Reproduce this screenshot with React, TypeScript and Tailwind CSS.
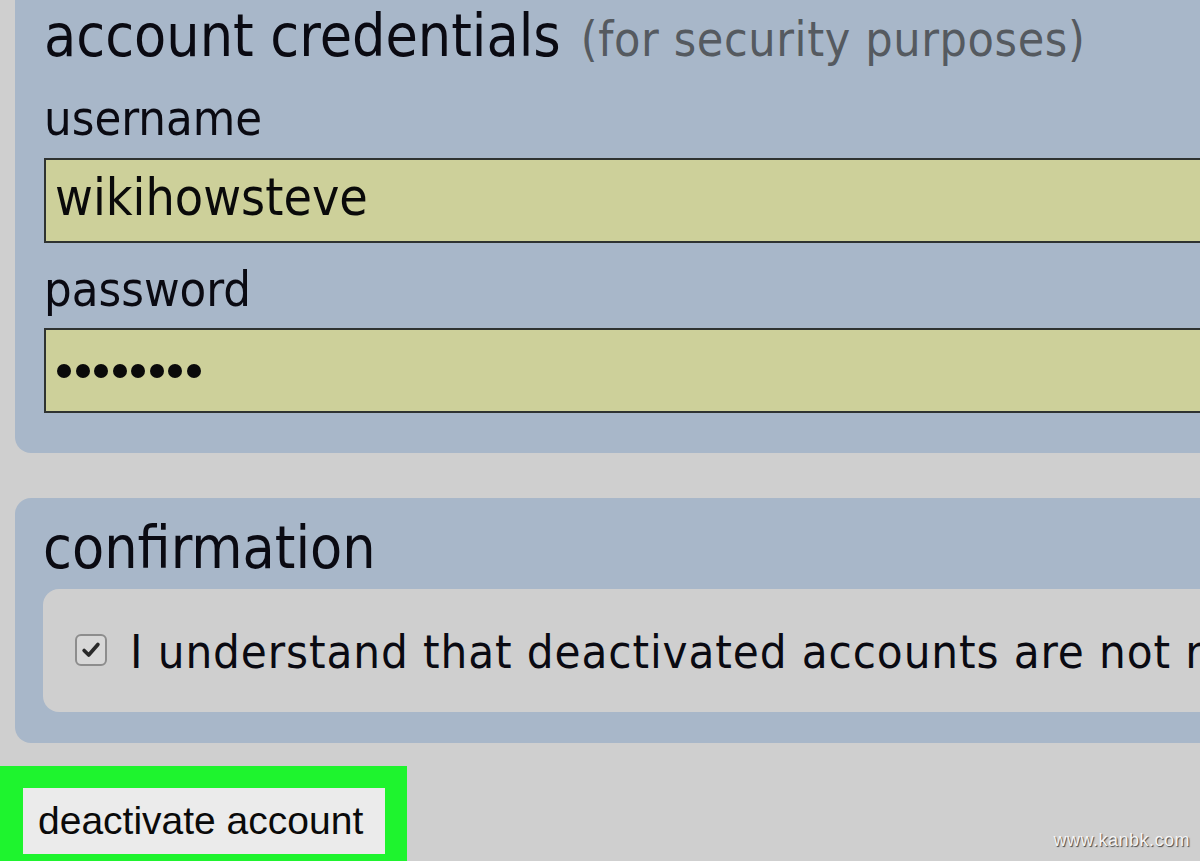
import React from "react";

const font = { fontFamily: '"DejaVu Sans Condensed", "DejaVu Sans", sans-serif' };

export default function App() {
  return (
    <div className="relative w-[1200px] h-[861px] overflow-hidden bg-[#cfcfcf]" style={font}>
      {/* Panel 1 */}
      <div className="ml-[15px] w-[1300px] -mt-[20px] bg-[#a8b7c9] rounded-bl-[16px] pl-[29px] pt-[23px] pb-[40px]">
        <div className="flex items-baseline leading-none h-[63px] pt-[4px]">
          <span className="text-[58.5px] text-[#0a0a12]">account credentials</span>
          <span className="ml-[20px] text-[48px] tracking-[0.6px] text-[#555a60]">(for security purposes)</span>
        </div>
        <div className="mt-[28px] text-[48.5px] leading-none text-[#0a0a12]">username</div>
        <div className="mt-[15px] h-[85px] border-2 border-[#2f3331] bg-[#cdd09a] flex items-center pl-[9px] text-[51.5px] text-[#0a0a0a]">
          <span className="-mt-[4px]">wikihowsteve</span>
        </div>
        <div className="mt-[22px] text-[48.5px] leading-none text-[#0a0a12]">password</div>
        <div className="mt-[15px] h-[85px] border-2 border-[#2f3331] bg-[#cdd09a] flex items-center pl-[11px] gap-[4.5px]">
          {Array.from({ length: 8 }).map((_, i) => (
            <span key={i} className="block w-[14px] h-[14px] rounded-full bg-[#0a0a0a]" />
          ))}
        </div>
      </div>

      {/* Panel 2 */}
      <div className="mt-[45px] ml-[15px] w-[1300px] h-[245px] bg-[#a8b7c9] rounded-[16px] pl-[28px] pt-[21px]">
        <div className="text-[58.5px] leading-none text-[#0a0a12]">confirmation</div>
        <div className="mt-[11px] h-[123px] bg-[#cfcfcf] rounded-[16px] flex items-center pl-[32px]">
          <span className="shrink-0 w-[32px] h-[32px] rounded-[6px] border-2 border-[#8d8d8d] bg-[#d8d8d8] flex items-center justify-center">
            <svg viewBox="0 0 24 24" className="w-[22px] h-[22px]">
              <path d="M4.5 12.5 L9.5 17.5 L19.5 6" fill="none" stroke="#2a2a2a" strokeWidth="4" strokeLinecap="round" strokeLinejoin="round" />
            </svg>
          </span>
          <span className="ml-[23px] mt-[2px] text-[47px] leading-none text-[#0a0a12] whitespace-nowrap tracking-[0.9px]">
            I understand that deactivated accounts are not recoverable
          </span>
        </div>
      </div>

      {/* Green highlight with button */}
      <div className="mt-[23px] w-[407px] h-[96px] bg-[#1ef42e] pl-[23px] pt-[22px]">
        <div
          className="w-[362px] h-[66px] bg-[#ebebeb] flex items-center pl-[15px] text-[39px] text-[#0a0a0a]"
          style={{ fontFamily: '"Liberation Sans", Arial, sans-serif' }}
        >
          deactivate account
        </div>
      </div>

      <div
        className="absolute right-[10px] bottom-[7px] text-[18px] text-[#f4f4f4] tracking-[0.5px]"
        style={{ fontFamily: '"Liberation Sans", Arial, sans-serif', textShadow: "1px 1px 1px #444" }}
      >
        www.kanbk.com
      </div>
    </div>
  );
}
